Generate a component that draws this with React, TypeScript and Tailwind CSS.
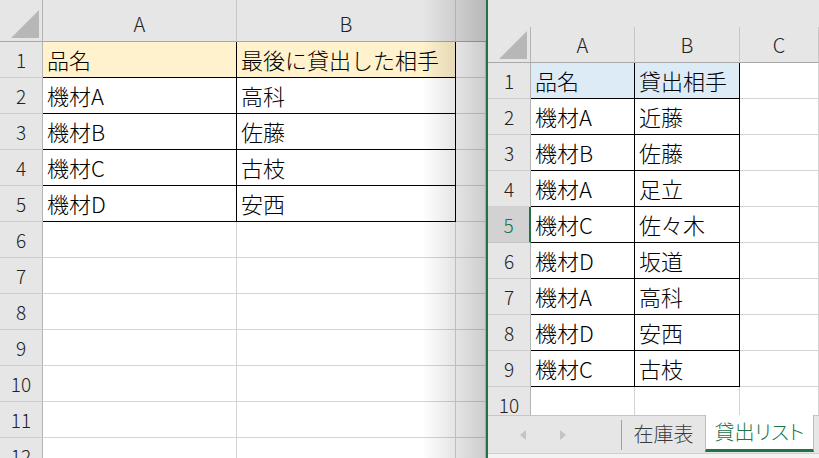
import React from "react";

type Row = [string, string];

const LEFT_ROWS: Row[] = [
  ["品名", "最後に貸出した相手"],
  ["機材A", "高科"],
  ["機材B", "佐藤"],
  ["機材C", "古枝"],
  ["機材D", "安西"],
];

const RIGHT_ROWS: Row[] = [
  ["品名", "貸出相手"],
  ["機材A", "近藤"],
  ["機材B", "佐藤"],
  ["機材A", "足立"],
  ["機材C", "佐々木"],
  ["機材D", "坂道"],
  ["機材A", "高科"],
  ["機材D", "安西"],
  ["機材C", "古枝"],
];

const FONT = "font-['Noto_Sans_CJK_JP','Noto_Sans',sans-serif] font-light";

function Corner() {
  return (
    <div className="flex items-end justify-end bg-[#e6e6e6] border-r border-b border-r-[#b4b4b4] border-b-[#a8a8a8] pr-[3px] pb-[3px]">
      <svg width="28" height="28" viewBox="0 0 28 28">
        <polygon points="28,0 28,28 0,28" fill="#b7b7b7" />
      </svg>
    </div>
  );
}

function ColHead({ label, last, low }: { label: string; last?: boolean; low?: boolean }) {
  return (
    <div
      className={`flex items-center justify-center bg-[#e6e6e6] border-b border-b-[#a8a8a8] text-[20px] text-[#222] leading-none ${
        last ? "" : "border-r border-r-[#c6c6c6]"
      } ${low ? "pt-[6px]" : ""}`}
    >
      {label}
    </div>
  );
}

function RowHead({ n, active }: { n: number; active?: boolean }) {
  return (
    <div
      className={
        active
          ? "flex items-center justify-center pb-[1px] bg-[#d2d2d2] border-r-2 border-b border-r-[#217346] border-b-[#c6c6c6] text-[19px] text-[#217346] leading-none"
          : "flex items-center justify-center pb-[1px] bg-[#e6e6e6] border-r border-b border-r-[#b4b4b4] border-b-[#cfcfcf] text-[19px] text-[#222] leading-none"
      }
    >
      {n}
    </div>
  );
}

function Cell({ text, table, fill }: { text?: string; table?: boolean; fill?: string }) {
  const border = table
    ? "border-r border-b border-black"
    : "border-r border-b border-[#d4d4d4]";
  return (
    <div
      className={`flex items-center pl-[4px] pb-[2px] text-[22px] leading-none text-black whitespace-nowrap overflow-hidden ${border} ${
        fill ?? "bg-white"
      }`}
    >
      {text}
    </div>
  );
}

function LeftSheet() {
  const rows = Array.from({ length: 12 }, (_, i) => i + 1);
  return (
    <div className="relative w-[486px] h-[458px] overflow-hidden bg-white">
      <div className="grid grid-cols-[43px_194px_219px_1fr] grid-rows-[42px] auto-rows-[36px]">
        <Corner />
        <ColHead label="A" low />
        <ColHead label="B" low />
        <ColHead label="" last />
        {rows.map((n) => {
          const data = LEFT_ROWS[n - 1];
          const fill = n === 1 ? "bg-[#fff2cc]" : undefined;
          return (
            <React.Fragment key={n}>
              <RowHead n={n} />
              <Cell text={data?.[0]} table={!!data} fill={fill} />
              <Cell text={data?.[1]} table={!!data} fill={fill} />
              <Cell />
            </React.Fragment>
          );
        })}
      </div>
      {/* shadow cast by the window on the right */}
      <div className="absolute right-0 top-0 h-full w-[64px] bg-linear-to-r from-transparent to-black/20" />
    </div>
  );
}

function TabBar() {
  return (
    <div className="flex h-[39px] bg-[#e6e6e6] border-t border-b border-t-[#c6c6c6] border-b-[#cfcfcf]">
      <div className="flex w-[133px] items-center gap-[34px] pl-[32px]">
        <svg width="6" height="10" viewBox="0 0 6 10">
          <polygon points="6,0 6,10 0,5" fill="#c4c4c4" />
        </svg>
        <svg width="6" height="10" viewBox="0 0 6 10">
          <polygon points="0,0 0,10 6,5" fill="#c4c4c4" />
        </svg>
      </div>
      <div className="flex items-center">
        <div className="h-[30px] w-px bg-[#a0a0a0]" />
      </div>
      <div className="flex w-[83px] items-center justify-center text-[20px] text-[#3a3a3a] leading-none pb-[2px]">
        在庫表
      </div>
      <div className="-mt-px flex h-[37px] w-[109px] items-center justify-center bg-white border-x border-[#bdbdbd] border-b-[3px] border-b-[#217346] text-[20px] text-[#217346] leading-none [font-feature-settings:'palt']">
        貸出リスト
      </div>
    </div>
  );
}

function RightSheet() {
  const rows = Array.from({ length: 10 }, (_, i) => i + 1);
  return (
    <div className="flex flex-1 flex-col h-[458px] overflow-hidden bg-[#e6e6e6]">
      <div className="h-[27px] shrink-0 bg-[#e6e6e6]" />
      <div className="h-[388px] overflow-hidden bg-white">
        <div className="grid grid-cols-[43px_104px_105px_1fr] grid-rows-[36px] auto-rows-[36px]">
          <Corner />
          <ColHead label="A" />
          <ColHead label="B" />
          <ColHead label="C" />
          {rows.map((n) => {
            const data = RIGHT_ROWS[n - 1];
            const fill = n === 1 ? "bg-[#ddebf7]" : undefined;
            return (
              <React.Fragment key={n}>
                <RowHead n={n} active={n === 5} />
                <Cell text={data?.[0]} table={!!data} fill={fill} />
                <Cell text={data?.[1]} table={!!data} fill={fill} />
                <Cell />
              </React.Fragment>
            );
          })}
        </div>
      </div>
      <TabBar />
      <div className="flex-1 bg-[#f3f3f3]" />
    </div>
  );
}

export default function App() {
  return (
    <div className={`flex w-[819px] h-[458px] overflow-hidden ${FONT}`}>
      <LeftSheet />
      <div className="w-[2px] shrink-0 bg-[#217346]" />
      <RightSheet />
    </div>
  );
}
